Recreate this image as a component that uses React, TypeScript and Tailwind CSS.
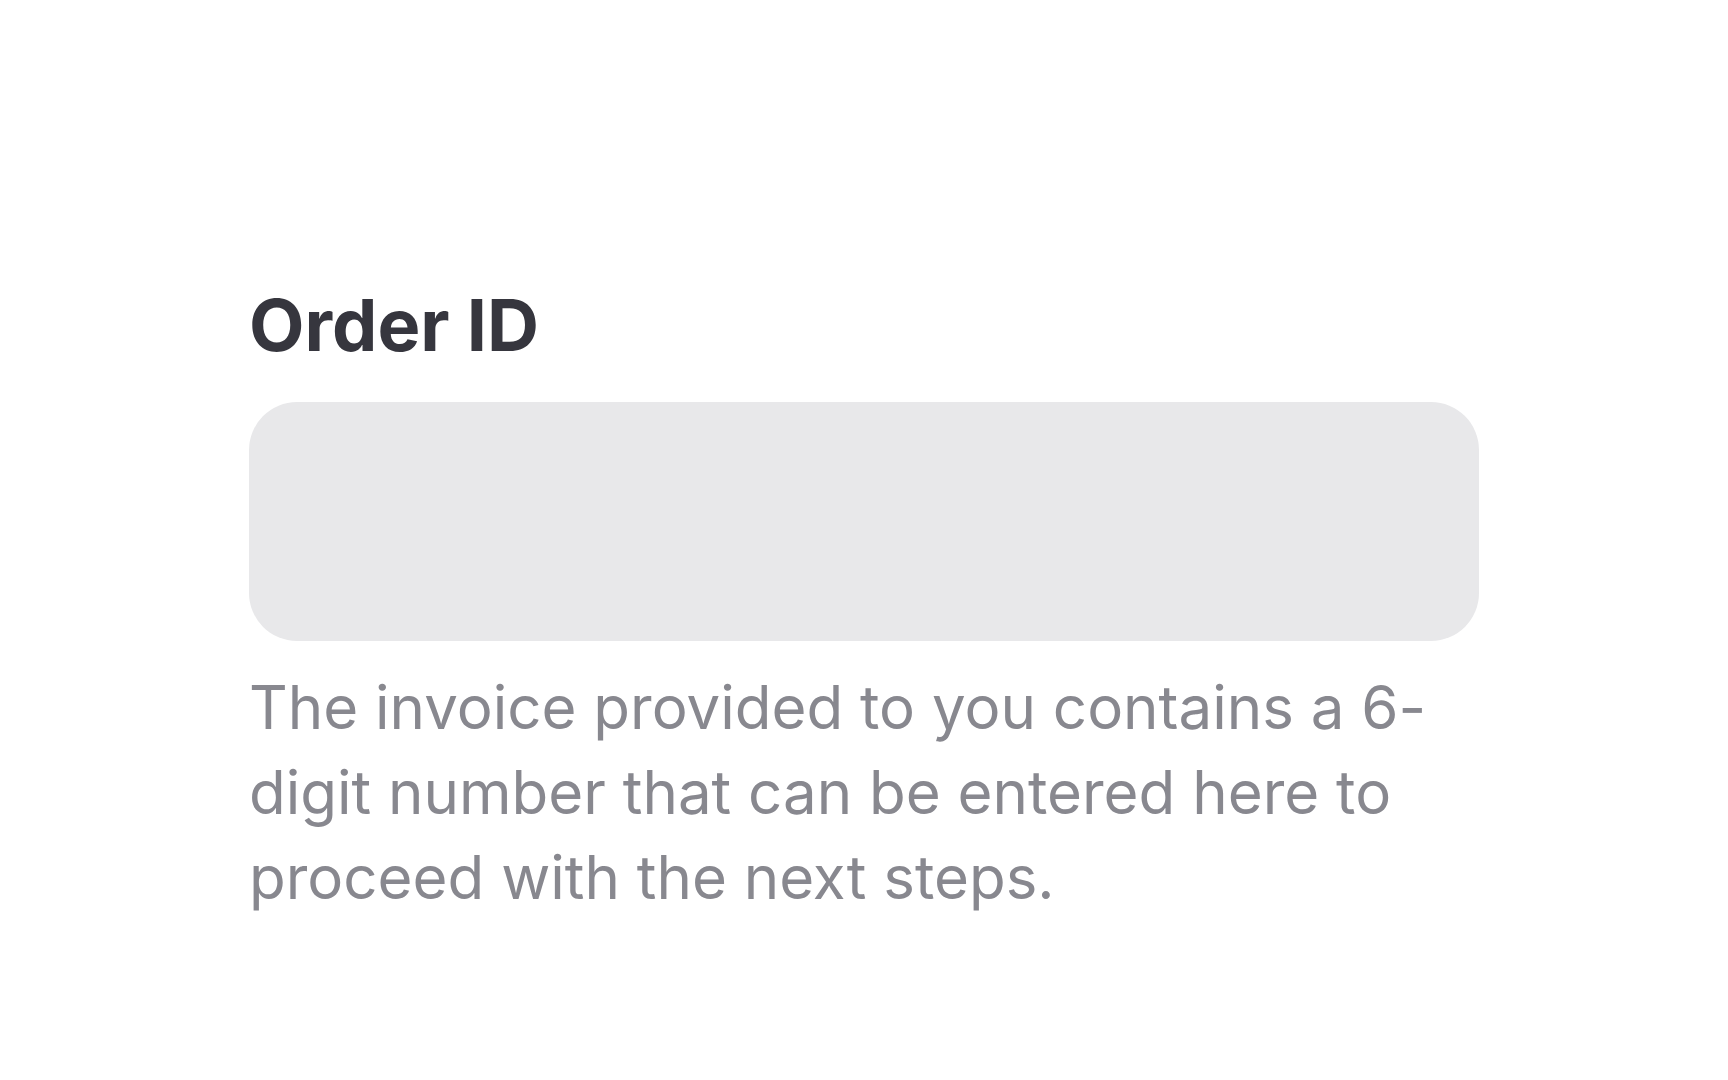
export default function App() {
  return (
    <div className="min-h-screen bg-white" style={{ fontFamily: 'Inter, "Noto Sans", sans-serif' }}>
      <div className="mx-auto w-[1230px] pt-[281px]">
        {/* Label */}
        <label className="block text-[72px] leading-[88px] font-bold text-[#36363e]">Order ID</label>

        {/* Input */}
        <div className="mt-[33px] h-[239px] rounded-[48px] bg-[#e8e8ea]"></div>

        {/* Help text */}
        <p className="mt-[24px] text-[60px] leading-[85px] text-[#88888f]">
          The invoice provided to you contains a 6-digit number that can be entered here to proceed with the next steps.
        </p>
      </div>
    </div>
  );
}
